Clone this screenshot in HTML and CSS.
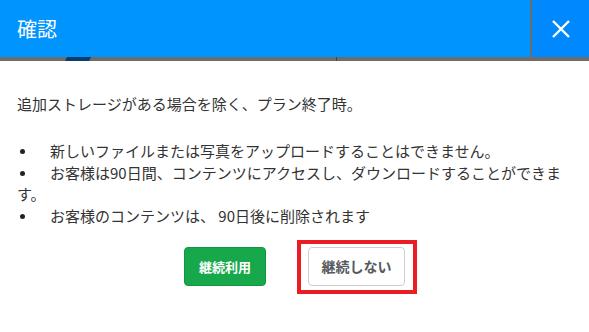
FILE: index.html
```html
<!DOCTYPE html>
<html lang="ja">
<head>
<meta charset="utf-8">
<link rel="stylesheet" href="styles.css">
</head>
<body>
<div class="dialog">
  <div class="header">
    <div class="title">確認</div>
    <div class="close">
      <svg width="20" height="20" viewBox="0 0 20 20"><path d="M2 2 L18 18 M18 2 L2 18" stroke="#fff" stroke-width="2.4" fill="none"/></svg>
    </div>
  </div>
  <div class="tabbar"><span class="tab"></span><span class="tick"></span></div>
  <div class="content">
    <p class="lead">追加ストレージがある場合を除く、プラン終了時。</p>
    <p class="line"><span class="bullet"></span>新しいファイルまたは写真をアップロードすることはできません。</p>
    <p class="line"><span class="bullet"></span>お客様は90日間、コンテンツにアクセスし、ダウンロードすることができます。</p>
    <p class="line"><span class="bullet"></span>お客様のコンテンツは、 90日後に削除されます</p>
    <div class="actions">
      <button class="btn primary">継続利用</button>
      <div class="highlight"><button class="btn secondary">継続しない</button></div>
    </div>
  </div>
</div>
</body>
</html>
```

FILE: styles.css
```css
* { box-sizing: border-box; }
html, body { margin: 0; padding: 0; background: #fff; }
body {
  width: 589px;
  height: 332px;
  overflow: hidden;
  font-family: "Noto Sans CJK JP", "Noto Sans", sans-serif;
}
.header {
  height: 57px;
  background: #0094ff;
  display: flex;
  align-items: stretch;
}
.title {
  flex: 1;
  color: #fff;
  font-size: 20px;
  line-height: 58px;
  padding-left: 17px;
}
.close {
  width: 59px;
  border-left: 2px solid #6d6d6d;
  background: #0088ff;
  display: flex;
  align-items: center;
  justify-content: center;
}
.tabbar {
  height: 4px;
  background: #6d6d6d;
  display: flex;
}
.tab {
  width: 24px;
  height: 4px;
  margin-left: 66px;
  background: #0a3d6b;
  transform: skewX(-30deg);
}
.tick {
  width: 1px;
  height: 4px;
  margin-left: 246px;
  background: #444;
}
.content {
  padding: 32px 24px 0 17px;
  color: #333;
  font-size: 15px;
}
.content p { margin: 0; }
.lead { line-height: 22px; margin-bottom: 25px !important; }
.line { line-height: 21.7px; }
.bullet {
  display: inline-block;
  width: 5px;
  height: 5px;
  border-radius: 50%;
  background: #222;
  margin: 0 25px 0 3px;
  vertical-align: 3px;
}
.actions {
  display: flex;
  align-items: center;
  gap: 31px;
  padding-left: 167px;
  margin-top: 13px;
}
.btn {
  font-family: inherit;
  font-size: 13px;
  font-weight: 700;
  height: 39px;
  border-radius: 4px;
  cursor: pointer;
}
.primary {
  width: 82px;
  background: #17a84b;
  color: #fff;
  border: 1px solid #13953f;
}
.highlight {
  border: 4px solid #ea1c24;
  padding: 3px 8px 4px 7px;
}
.secondary {
  display: block;
  width: 97px;
  background: #fff;
  color: #555a60;
  border: 1px solid #cfcfcf;
  font-size: 14px;
}
```
